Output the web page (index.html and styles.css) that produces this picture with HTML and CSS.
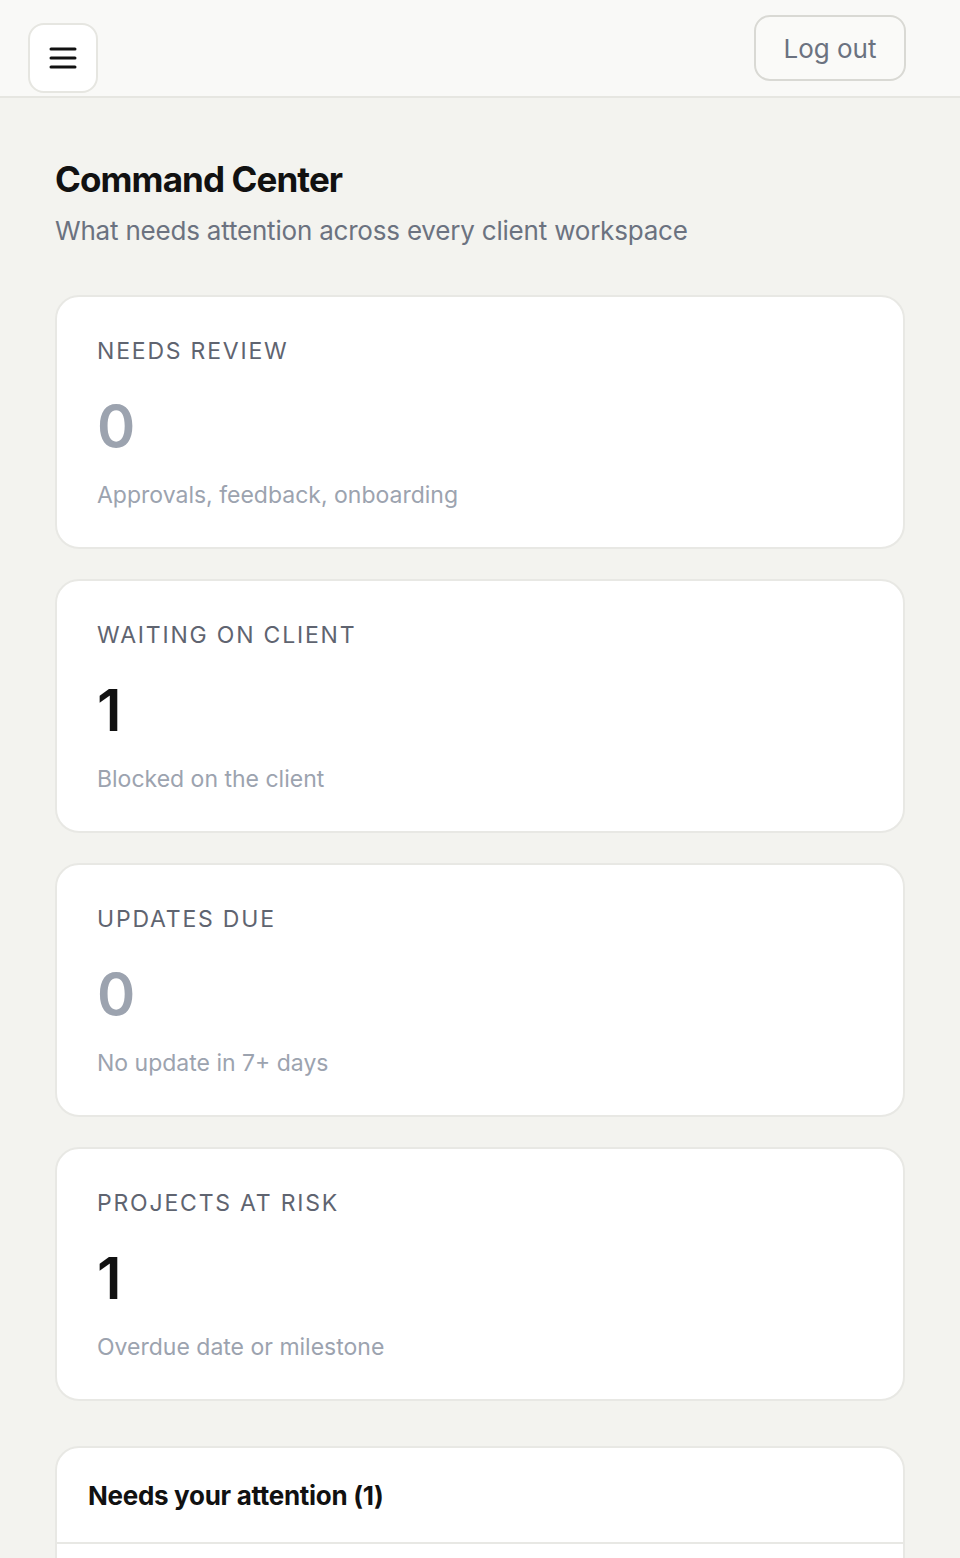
FILE: index.html
```html
<!DOCTYPE html>
<html lang="en">
<head>
  <meta charset="UTF-8">
  <meta name="viewport" content="width=device-width, initial-scale=1.0">
  <title>Command Center</title>
  <link rel="stylesheet" href="styles.css">
</head>
<body>
  <header class="topbar">
    <button class="menu-btn" aria-label="Menu">
      <svg width="30" height="30" viewBox="0 0 30 30" fill="none" stroke="#111" stroke-width="3" stroke-linecap="round">
        <line x1="3" y1="6" x2="27" y2="6"/>
        <line x1="3" y1="15" x2="27" y2="15"/>
        <line x1="3" y1="24" x2="27" y2="24"/>
      </svg>
    </button>
    <button class="logout-btn">Log out</button>
  </header>

  <main class="page">
    <h1 class="page-title">Command Center</h1>
    <p class="page-sub">What needs attention across every client workspace</p>

    <section class="stats">
      <div class="stat-card">
        <div class="stat-label">Needs review</div>
        <div class="stat-value muted">0</div>
        <div class="stat-desc">Approvals, feedback, onboarding</div>
      </div>
      <div class="stat-card">
        <div class="stat-label">Waiting on client</div>
        <div class="stat-value">1</div>
        <div class="stat-desc">Blocked on the client</div>
      </div>
      <div class="stat-card">
        <div class="stat-label">Updates due</div>
        <div class="stat-value muted">0</div>
        <div class="stat-desc">No update in 7+ days</div>
      </div>
      <div class="stat-card">
        <div class="stat-label">Projects at risk</div>
        <div class="stat-value">1</div>
        <div class="stat-desc">Overdue date or milestone</div>
      </div>
    </section>

    <section class="attention">
      <div class="attention-head">
        <h2>Needs your attention (1)</h2>
      </div>
      <div class="attention-body"></div>
    </section>
  </main>
</body>
</html>
```

FILE: styles.css
```css
body {
  margin: 0;
  padding: 0;
  background: #f3f3ef;
  font-family: Inter, "Noto Sans", sans-serif;
  color: #111;
}
.topbar {
  height: 96px;
  background: #f9f9f7;
  border-bottom: 2px solid #e6e6e1;
  display: flex;
  justify-content: space-between;
  padding: 0 54px 0 28px;
}
.menu-btn {
  align-self: flex-start;
  margin-top: 23px;
  width: 70px;
  height: 70px;
  background: #fff;
  border: 2px solid #e6e6e1;
  border-radius: 16px;
  display: flex;
  align-items: center;
  justify-content: center;
  padding: 0;
}
.logout-btn {
  align-self: flex-start;
  margin-top: 15px;
  width: 152px;
  height: 66px;
  background: #fafaf8;
  border: 2px solid #d9d9d4;
  border-radius: 16px;
  font-family: inherit;
  font-size: 26px;
  color: #6b7280;
  padding: 0;
}
.page {
  padding: 59px 55px 0;
}
.page-title {
  margin: 0;
  font-size: 35px;
  line-height: 44px;
  font-weight: 700;
  letter-spacing: -0.9px;
}
.page-sub {
  margin: 12px 0 0;
  font-size: 26px;
  line-height: 36px;
  letter-spacing: -0.2px;
  color: #6b7280;
}
.stats {
  margin-top: 46px;
  display: flex;
  flex-direction: column;
  gap: 30px;
}
.stat-card {
  background: #fff;
  border: 2px solid #e8e8e4;
  border-radius: 24px;
  padding: 38px 40px 36px;
}
.stat-label {
  font-size: 23px;
  line-height: 32px;
  letter-spacing: 1.8px;
  text-transform: uppercase;
  color: #5f6470;
}
.stat-value {
  margin-top: 23px;
  font-size: 58px;
  line-height: 72px;
  font-weight: 600;
  color: #111;
}
.stat-value.muted {
  color: #9ca3af;
}
.stat-desc {
  margin-top: 17px;
  font-size: 23px;
  line-height: 32px;
  color: #9ca3af;
}
.attention {
  margin-top: 45px;
  background: #fff;
  border: 2px solid #e8e8e4;
  border-radius: 24px;
}
.attention-head {
  padding: 32px 31px 30px;
  border-bottom: 2px solid #e8e8e4;
}
.attention-head h2 {
  margin: 0;
  font-size: 26px;
  line-height: 32px;
  font-weight: 700;
  letter-spacing: -0.3px;
}
.attention-body {
  height: 120px;
}
```
